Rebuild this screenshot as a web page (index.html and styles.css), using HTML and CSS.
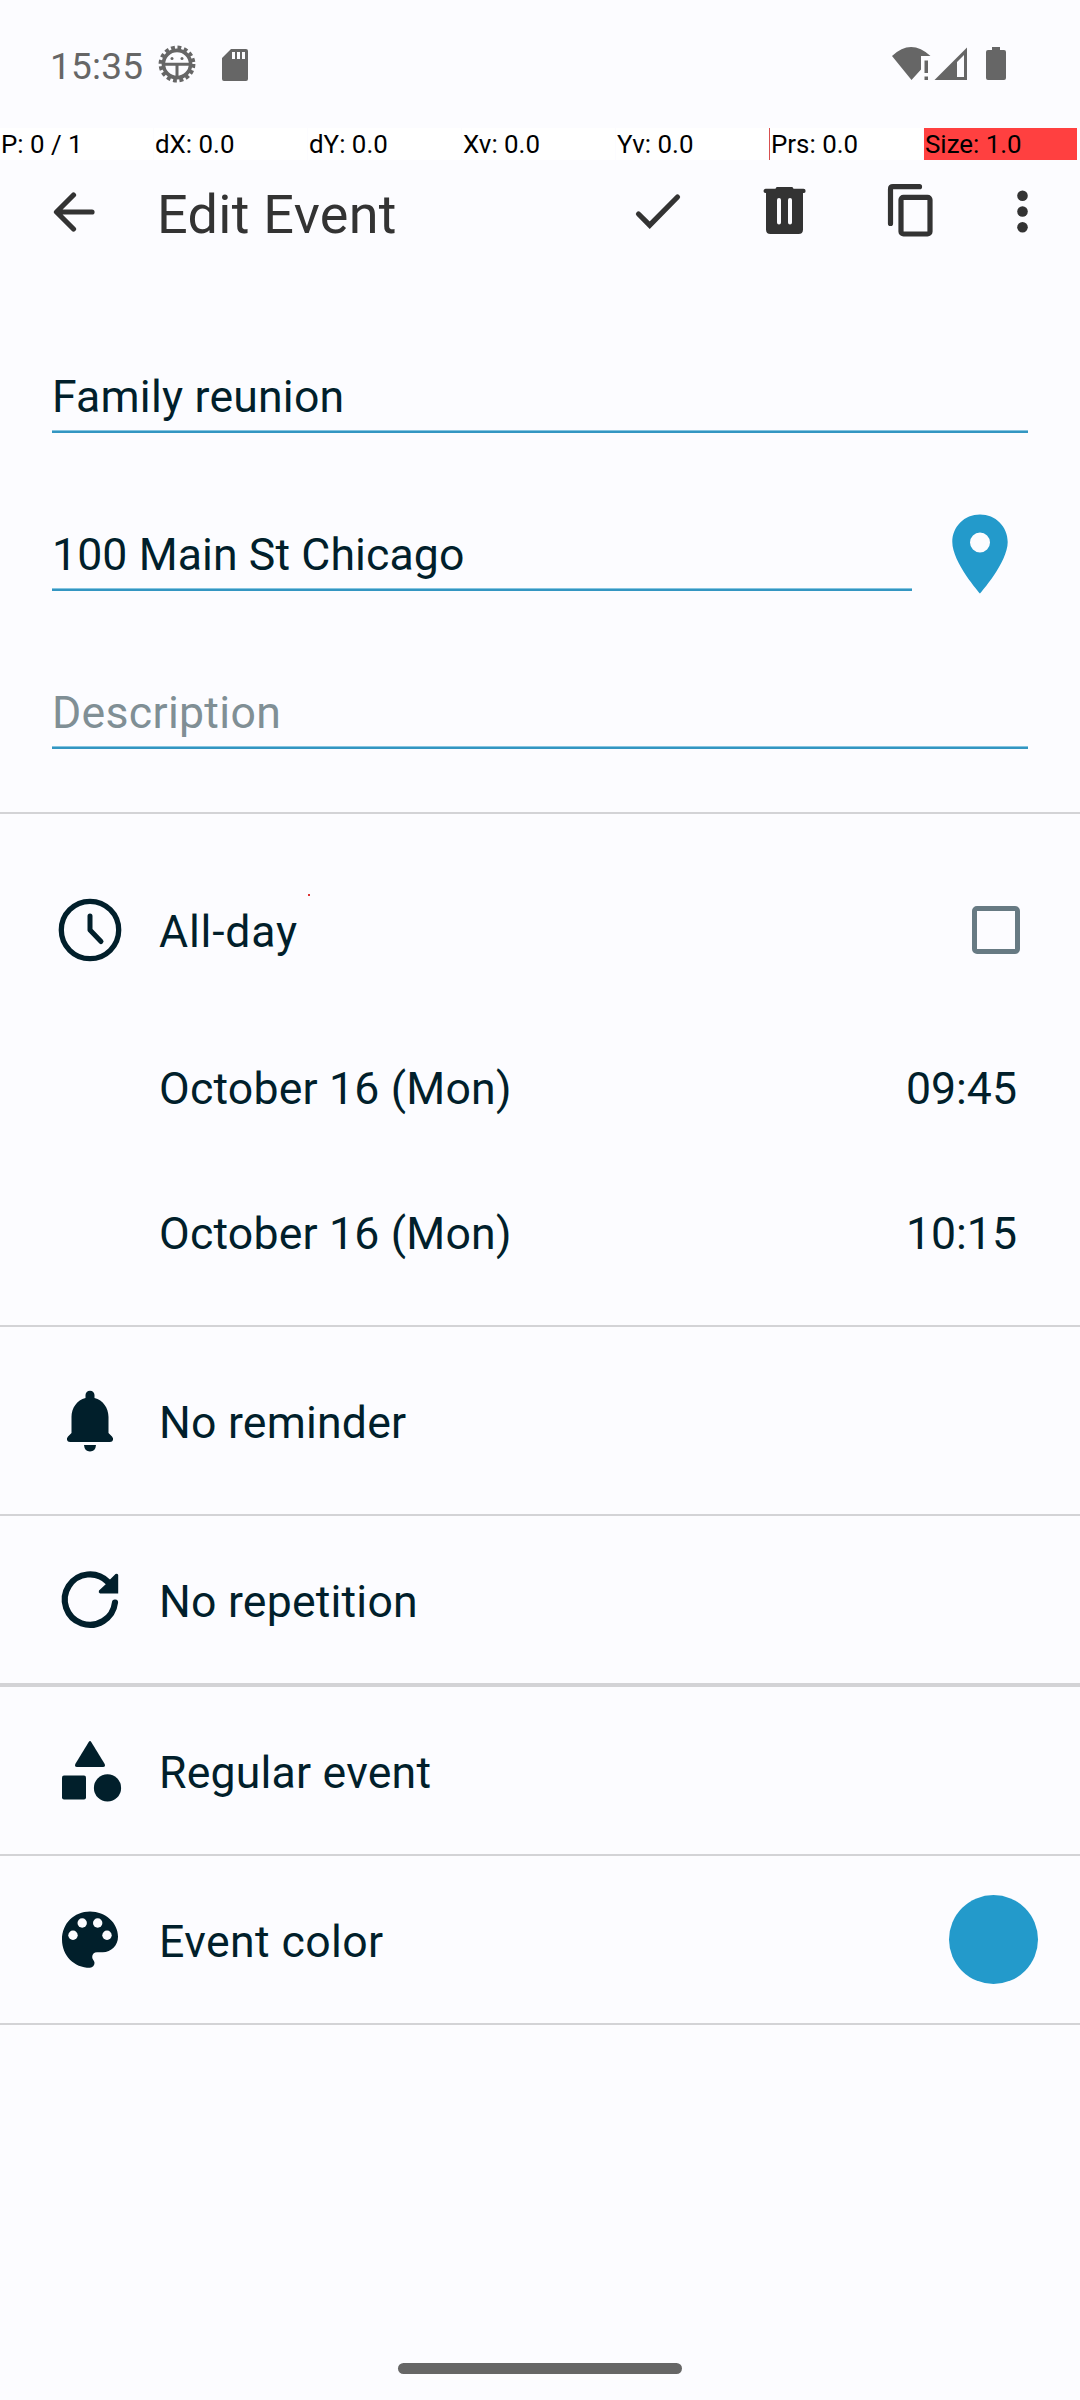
FILE: index.html
```html
<!DOCTYPE html>
<html lang="en">
<head>
<meta charset="utf-8">
<title>Edit Event</title>
<link rel="stylesheet" href="styles.css">
</head>
<body>
<div class="screen">
  <header class="status">
    <span class="clock">15:35</span>
    <svg class="gear" width="38" height="38" viewBox="-19 -19 38 38">
      <circle r="16.400" fill="none" stroke="#666" stroke-width="4" stroke-dasharray="3.800 2.640"/>
      <circle r="13.600" fill="none" stroke="#666" stroke-width="3.600"/>
      <path d="M-13 0.300H13M0 0.300V13" stroke="#666" stroke-width="3"/>
      <circle cx="-5" cy="-5.500" r="1.500" fill="#666"/><circle cx="5" cy="-5.500" r="1.500" fill="#666"/>
    </svg>
    <svg class="sd" width="26" height="32" viewBox="0 0 26 32"><path fill="#666" fill-rule="evenodd" d="M9 0H24Q26 0 26 2V30Q26 32 24 32H2Q0 32 0 30V9ZM10 3V10H13V3ZM15 3V10H18V3ZM20 3V10H23V3Z"/></svg>
    <span class="grow"></span>
    <svg width="120" height="34" viewBox="890 47 120 34" fill="#666">
      <path d="M892 56Q911 38 930.500 56H921V69.500L911.500 80Z"/>
      <path d="M924.500 60.500h3.500V73h-3.500zM924.500 76.500h3.500V80h-3.500z"/>
      <path fill-rule="evenodd" d="M934.500 80L967 47.500V80ZM957 62V77H964V55Z"/>
      <path d="M992 47h8v3h4q2 0 2 2v26q0 2-2 2h-16q-2 0-2-2v-26q0-2 2-2h4z"/>
    </svg>
  </header>

  <div class="debug">
    <span>P: 0 / 1</span><span>dX: 0.0</span><span>dY: 0.0</span><span>Xv: 0.0</span><span>Yv: 0.0</span><span class="prs">Prs: 0.0</span><span class="size">Size: 1.0</span>
  </div>

  <nav class="toolbar">
    <svg class="back" width="42" height="42" viewBox="53 190.500 42 42" fill="none" stroke="#333" stroke-width="5.200" stroke-linecap="round" stroke-linejoin="round"><path d="M92 211.500H57M73.500 194.500L56.500 211.500L73.500 228.500"/></svg>
    <h1>Edit Event</h1>
    <svg width="400" height="54" viewBox="630 184 400 54">
      <path d="M638.500 214L649.700 225.200L677.500 197" fill="none" stroke="#333" stroke-width="5.200" stroke-linecap="round"/>
      <path fill="#333" fill-rule="evenodd" d="M777 187H792Q793 187 793.500 188.700H803.500Q805.600 188.700 805.600 191T803.500 193H803V229.500Q803 234 798.500 234H770.500Q766 234 766 229.500V193H765.500Q763.500 193 763.500 191T765.500 188.700H775.500Q776 187 777 187ZM777 200V222.500Q777 224.500 779 224.500T781 222.500V200Q781 198 779 198T777 200ZM788 200V222.500Q788 224.500 790 224.500T792 222.500V200Q792 198 790 198T788 200Z"/>
      <g fill="none" stroke="#333" stroke-width="5.200" stroke-linecap="round"><path d="M919.500 186.700H893Q890.500 186.700 890.500 189.200V223.500"/><rect x="901" y="197.300" width="29" height="36.700" rx="2.500"/></g>
      <g fill="#333"><circle cx="1022.500" cy="195.700" r="5.300"/><circle cx="1022.500" cy="211.500" r="5.300"/><circle cx="1022.500" cy="227.300" r="5.300"/></g>
    </svg>
  </nav>

  <main>
    <section class="fields">
      <div class="field">Family reunion</div>
      <div class="place">
        <div class="field">100 Main St Chicago</div>
        <svg width="56" height="80" viewBox="952 513.500 56 80"><path fill="#239acb" fill-rule="evenodd" d="M980 514C964.500 514 952.300 526 952.300 541.500C952.300 562 980 593 980 593S1007.700 562 1007.700 541.500C1007.700 526 995.500 514 980 514ZM980 532A10 10 0 1 1 980 552A10 10 0 1 1 980 532Z"/></svg>
      </div>
      <div class="field hint">Description</div>
    </section>

    <section class="when">
      <i class="touch"></i>
      <div class="row allday">
        <svg class="icon" viewBox="0 0 64 64" fill="none" stroke="#011f2b"><circle cx="32" cy="32" r="28.700" stroke-width="5.300"/><path d="M32 18V32L43 43.500" stroke-width="5" stroke-linecap="round" stroke-linejoin="round"/></svg>
        <span>All-day</span><b class="check"></b>
      </div>
      <div class="row start"><span>October 16 (Mon)</span><time>09:45</time></div>
      <div class="row end"><span>October 16 (Mon)</span><time>10:15</time></div>
    </section>

    <section class="row reminder">
      <svg class="icon" viewBox="58 1389 64 64" fill="#011f2b"><path d="M90 1390.700C87.300 1390.700 85.500 1392.700 85.500 1395V1398C77 1400 71.500 1408 71.500 1417V1433L68 1436.500Q66.500 1438 67 1440Q67.500 1442 70 1442H110Q112.500 1442 113 1440Q113.500 1438 112 1436.500L108.500 1433V1417C108.500 1408 103 1400 94.500 1398V1395C94.500 1392.700 92.700 1390.700 90 1390.700ZM84 1445H96Q95.500 1451.500 90 1451.500T84 1445Z"/></svg>
      <span>No reminder</span>
    </section>
    <section class="row repeat">
      <svg class="icon" viewBox="58 1568 64 64"><path d="M115 1602.500A25.200 25.200 0 1 1 108 1582" fill="none" stroke="#011f2b" stroke-width="6.200" stroke-linecap="round"/><path fill="#011f2b" d="M118.200 1575V1593.500H100Q98 1592.500 99 1590.500L106 1584L108.500 1581L115.500 1574Q117.500 1573 118.200 1575Z"/></svg>
      <span>No repetition</span>
    </section>
    <section class="row type">
      <svg class="icon" viewBox="58 1739 64 64" fill="#011f2b"><path d="M88.600 1742.200Q90 1740 91.400 1742.200L104.700 1764Q105.800 1767 103 1767H77Q74.200 1767 75.300 1764Z"/><rect x="62" y="1775.500" width="24" height="24" rx="2"/><circle cx="107.500" cy="1787.900" r="13.600"/></svg>
      <span>Regular event</span>
    </section>
    <section class="row color">
      <svg class="icon" viewBox="0 0 64 64" fill="#011f2b"><path d="M32 3.500C16 3.500 4 15.500 4 31.500C4 47.500 16 59.800 32 59.800C34.600 59.800 36.500 57.800 36.500 55.100C36.500 53.900 36 52.800 35.300 52C34.500 51 34.200 50 34.200 49C34.200 46.200 36.200 44.200 39 44.200H44.700C53.300 44.200 60 37.300 60 28.700C60 14.800 47.500 3.500 32 3.500Z"/><g fill="#fcfcff"><circle cx="15" cy="27.300" r="4.700"/><circle cx="24.200" cy="15" r="4.700"/><circle cx="39.700" cy="15" r="4.700"/><circle cx="49" cy="27.300" r="4.700"/></g></svg>
      <span>Event color</span><b class="swatch"></b>
    </section>
  </main>
  <footer><div class="pill"></div></footer>
</div>
</body>
</html>
```
FILE: styles.css
```css
* { box-sizing: border-box; }
body { margin: 0; background: #fcfcff; font-family: Roboto, sans-serif; color: #011f2b; }
svg { display: block; flex: none; }
.screen { width: 1080px; height: 2400px; display: flex; flex-direction: column; }
.grow { flex: 1; }

.status { height: 128px; padding: 46px 70px 0 50px; display: flex; align-items: flex-start; }
.clock { width: 108px; font-size: 37px; letter-spacing: 0.2px; line-height: 41px; color: #666; }
.gear { margin-top: -1px; }
.sd { margin: 3px 0 0 26px; }
.status svg:last-child { margin-top: 1px; }

.debug { height: 32px; display: grid; grid-template-columns: repeat(7, 153px); grid-template-rows: 32px; column-gap: 1px; color: #000; font-size: 25.900px; line-height: 33px; }
.debug span { background: #fff; padding-left: 1px; white-space: nowrap; }
.debug .prs { box-shadow: -1px 0 #d85050; }
.debug .size { background: #ff4040; }

.toolbar { height: 160px; padding: 24px 50px 0 53px; display: flex; align-items: flex-start; }
.back { margin-top: 6.500px; }
.toolbar h1 { flex: 1; margin: 0 0 0 62px; font-size: 54px; letter-spacing: 0.3px; line-height: 62px; font-weight: 400; color: #333; }

main { font-size: 44.600px; letter-spacing: 0.2px; line-height: 52px; }
.fields { height: 494px; padding: 55px 52px 0; border-bottom: 2px solid #d3d3d6; display: flex; flex-direction: column; gap: 100px; }
.field { height: 58px; line-height: 44px; border-bottom: 2px solid #3396c2; box-shadow: inset 0 -1px #86c5e0; }
.hint { color: #808f95; letter-spacing: 0.3px; }
.place { height: 58px; display: flex; }
.place .field { width: 860px; letter-spacing: 0.1px; }
.place svg { margin: -19px 0 0 40px; }

.row { display: flex; align-items: flex-start; padding-left: 159px; }
.row span { flex: 1; }
.row time { letter-spacing: 0; }
.icon { width: 64px; height: 64px; margin: -8px 37px 0 -101px; }
.when { height: 513px; border-bottom: 2px solid #d3d3d6; position: relative; }
.touch { position: absolute; left: 308px; top: 80px; width: 2px; height: 2px; background: #d33; }
.allday { padding-top: 92px; padding-right: 60px; height: 249px; letter-spacing: 0.8px; }
.check { width: 48px; height: 48px; border: 5px solid #677a83; border-radius: 5px; }
.start { height: 145px; padding-right: 63px; }
.end { padding-right: 63px; }

.reminder { height: 189px; padding-top: 70px; border-bottom: 2px solid #d3d3d6; }
.repeat { height: 171px; padding-top: 60px; border-bottom: 4px solid #d3d3d6; }
.type { height: 169px; padding-top: 60px; border-bottom: 2px solid #d3d3d6; }
.color { height: 169px; padding: 60px 42px 0 159px; border-bottom: 2px solid #d3d3d6; letter-spacing: 0.4px; }
.swatch { width: 89px; height: 89px; margin-top: -21px; border-radius: 50%; background: #239acb; }

footer { margin-top: auto; padding-bottom: 26px; display: flex; justify-content: center; }
.pill { width: 284px; height: 11px; border-radius: 6px; background: #666; }
```
